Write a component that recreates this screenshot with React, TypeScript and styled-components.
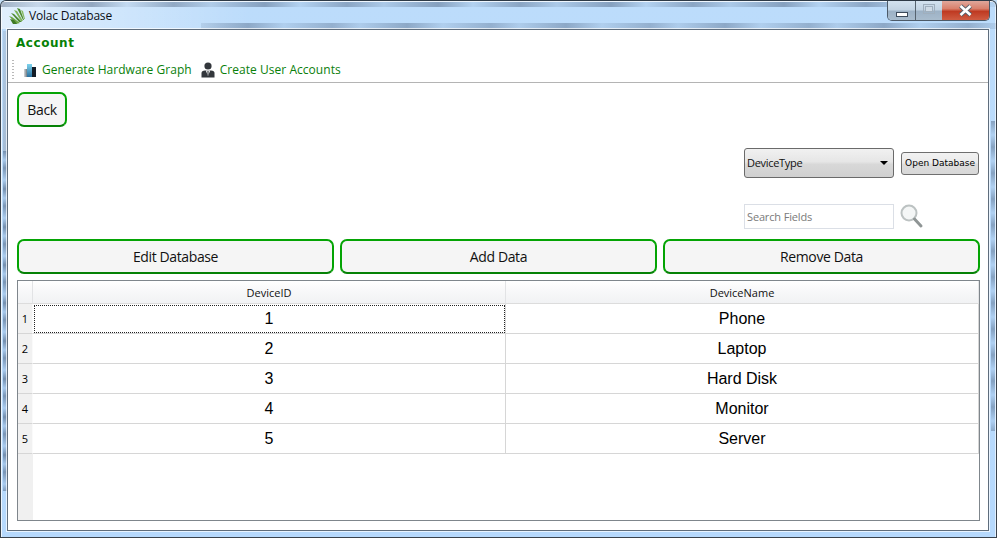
import { Fragment } from 'react';
import styled, { createGlobalStyle } from 'styled-components';

const GlobalStyle = createGlobalStyle`
  html, body {
    margin: 0;
    padding: 0;
    background: #c4dff6;
  }
  * {
    box-sizing: border-box;
  }
`;

const devices = ['Phone', 'Laptop', 'Hard Disk', 'Monitor', 'Server'];

const Frame = styled.div`
  width: 997px;
  height: 538px;
  display: flex;
  flex-direction: column;
  overflow: hidden;
  border: 1px solid #39424c;
  border-top-color: #2e3a46;
  border-radius: 6px 6px 0 0;
  box-shadow: inset 1px 1px 0 rgba(255, 255, 255, 0.75), inset -1px 0 0 rgba(255, 255, 255, 0.6);
  background:
    repeating-linear-gradient(180deg, rgba(70, 92, 122, 0.6) 0, rgba(120, 150, 185, 0.25) 9px, rgba(70, 92, 122, 0.55) 17px, rgba(120, 150, 185, 0.2) 29px, rgba(70, 92, 122, 0.6) 38px) 2px 150px / 4px 340px no-repeat,
    linear-gradient(180deg, rgba(140, 150, 165, 0.25), rgba(140, 150, 165, 0.45)) 2px 30px / 4px 120px no-repeat,
    repeating-linear-gradient(180deg, rgba(70, 92, 122, 0.45) 0, rgba(120, 150, 185, 0.15) 14px, rgba(70, 92, 122, 0.45) 26px) 990px 120px / 4px 310px no-repeat,
    linear-gradient(180deg, #bcdcfb 0, #b6d9fd 100%);
`;

const TitleBar = styled.div`
  height: 28px;
  flex: none;
  display: flex;
  align-items: flex-start;
  padding-left: 7px;
  background:
    repeating-linear-gradient(90deg, rgba(70, 90, 120, 0.42) 0, rgba(70, 90, 120, 0.14) 37px, rgba(70, 90, 120, 0.46) 91px, rgba(70, 90, 120, 0.08) 126px, rgba(70, 90, 120, 0.42) 173px) 0 1px / 100% 5px no-repeat,
    repeating-linear-gradient(90deg, rgba(70, 90, 120, 0.12) 0, rgba(70, 90, 120, 0.4) 47px, rgba(70, 90, 120, 0.1) 83px, rgba(70, 90, 120, 0.34) 131px, rgba(70, 90, 120, 0.12) 159px) 200px 22px / 100% 6px no-repeat,
    linear-gradient(90deg, rgba(255, 255, 255, 0.55), rgba(255, 255, 255, 0) 25%);
`;

const AppIcon = styled.svg`
  width: 18px;
  height: 18px;
  margin-top: 6px;
  flex: none;
`;

const Title = styled.span`
  margin: 6px 0 0 3px;
  font: 12px/18px "Open Sans", sans-serif;
  letter-spacing: -0.2px;
  color: #0b0f16;
`;

const Controls = styled.div`
  margin-left: auto;
  margin-right: 6px;
  display: flex;
  height: 20px;
  border: 1px solid #4c5a68;
  border-top: none;
  border-radius: 0 0 5px 5px;
  overflow: hidden;
`;

const Control = styled.div<{ $width: number; $close?: boolean }>`
  width: ${(p) => p.$width}px;
  display: flex;
  align-items: center;
  justify-content: center;
  border-left: ${(p) => (p.$close ? 'none' : '1px solid #56636f')};
  background: ${(p) =>
    p.$close
      ? 'linear-gradient(180deg, #e0a79b 0, #d9806c 40%, #bf3a22 55%, #cf5c42 100%)'
      : 'linear-gradient(180deg, #d3e2ef 0, #c3d4e3 45%, #9db2c6 55%, #a9bccd 100%)'};
  &:first-child {
    border-left: none;
  }
`;

const MinGlyph = styled.div`
  width: 12px;
  height: 5px;
  margin-top: 7px;
  background: #fff;
  border: 1px solid #3c4a5a;
`;

const MaxGlyph = styled.div`
  width: 12px;
  height: 10px;
  margin-top: -3px;
  border: 1px solid #a0afbd;
  display: flex;
  align-items: center;
  justify-content: center;
  &::after {
    content: '';
    width: 6px;
    height: 4px;
    border: 1px solid #a0afbd;
    background: #cfdbe6;
  }
`;

const Client = styled.div`
  flex: none;
  height: 502px;
  margin: 0 7px 0 6px;
  display: flex;
  flex-direction: column;
  background: #fff;
  border: 1px solid #5f6d7c;
  box-shadow: 0 0 0 1px rgba(255, 255, 255, 0.7);
`;

const Heading = styled.div`
  height: 25px;
  padding: 5px 0 0 8px;
  font: bold 12px/16px "DejaVu Sans", sans-serif;
  letter-spacing: 0.55px;
  color: #078207;
`;

const Toolbar = styled.div`
  height: 28px;
  display: flex;
  align-items: center;
  padding: 2px 0 0 4px;
  border-bottom: 1px solid #b4b4b4;
`;

const Grip = styled.div`
  width: 2px;
  height: 20px;
  margin-right: 9px;
  background: repeating-linear-gradient(180deg, #b9b9b9 0, #b9b9b9 1px, transparent 1px, transparent 3px);
`;

const ToolItem = styled.div`
  display: flex;
  align-items: center;
  gap: 5px;
  margin-right: 9px;
  font: 12px/16px "Open Sans", sans-serif;
  letter-spacing: 0.04px;
  color: #0a800a;
`;

const Body = styled.div`
  flex: 1;
  display: flex;
  flex-direction: column;
  padding: 9px;
`;

const GreenButton = styled.button`
  height: 35px;
  padding: 0;
  border: 2px solid #04a404;
  border-bottom-color: #068206;
  border-radius: 7px;
  background: #f5f5f5;
  color: #111;
  font: 14px/18px "Open Sans", sans-serif;
  letter-spacing: -0.38px;
`;

const BackButton = styled(GreenButton)`
  width: 50px;
  align-self: flex-start;
`;

const SourceRow = styled.div`
  display: flex;
  align-items: center;
  margin-top: 21px;
  justify-content: flex-end;
  gap: 7px;
  height: 30px;
`;

const Combo = styled.div`
  width: 150px;
  height: 30px;
  display: flex;
  align-items: center;
  justify-content: space-between;
  padding: 0 5px 0 2px;
  border: 1px solid #6a6a6a;
  border-radius: 3px;
  background: linear-gradient(180deg, #f1f1f1 0, #e6e6e6 45%, #d8d8d8 55%, #d0d0d0 100%);
  font: 11px/14px "Open Sans", sans-serif;
  letter-spacing: -0.3px;
  color: #111;
`;

const ComboArrow = styled.span`
  width: 0;
  height: 0;
  border-left: 4px solid transparent;
  border-right: 4px solid transparent;
  border-top: 4px solid #000;
`;

const OpenButton = styled.button`
  width: 78px;
  height: 23px;
  padding: 0;
  border: 1px solid #6f6f6f;
  border-radius: 3px;
  background: linear-gradient(180deg, #f2f2f2 0, #ebebeb 45%, #dcdcdc 55%, #d8d8d8 100%);
  font: 9px/12px "DejaVu Sans", sans-serif;
  color: #000;
`;

const SearchRow = styled.div`
  display: flex;
  align-items: center;
  margin: 25px 0 0 727px;
  height: 26px;
  gap: 6px;
`;

const SearchField = styled.div`
  width: 150px;
  height: 25px;
  padding: 0 2px;
  border: 1px solid #dbdfe6;
  background: #fff;
  font: 11px/23px "Open Sans", sans-serif;
  letter-spacing: -0.15px;
  color: #7a7a7a;
`;

const ActionRow = styled.div`
  display: grid;
  grid-template-columns: 317px 317px 317px;
  gap: 6px;
  margin-top: 10px;
`;

const Table = styled.div`
  margin-top: 6px;
  width: 963px;
  height: 241px;
  display: grid;
  grid-template-columns: 15px 473px 1fr;
  grid-template-rows: 23px repeat(5, 30px) 1fr;
  background: #fff;
  border: 1px solid #7f868c;
`;

const HeaderCell = styled.div`
  display: flex;
  align-items: center;
  justify-content: center;
  padding-top: 2px;
  background: linear-gradient(180deg, #fff 0, #f9f9fa 35%, #f1f2f4 100%);
  border-right: 1px solid #e2e3e5;
  border-bottom: 1px solid #dcdcdc;
  font: 11px/14px "Open Sans", sans-serif;
  color: #111;
`;

const RowHeader = styled.div`
  display: flex;
  align-items: center;
  justify-content: center;
  background: #f1f1f1;
  border-right: 1px solid #fafafa;
  border-bottom: 1px solid #d6d6d6;
  font: 11px/14px "Open Sans", sans-serif;
  color: #000;
`;

const Cell = styled.div<{ $focused?: boolean }>`
  display: flex;
  align-items: center;
  justify-content: center;
  padding-top: 1px;
  border-right: 1px solid #d6d6d6;
  border-bottom: 1px solid #d6d6d6;
  outline: ${(p) => (p.$focused ? '1px dotted #222' : 'none')};
  outline-offset: -2px;
  font: 16px/20px "Liberation Sans", sans-serif;
  color: #000;
`;

const RowHeaderFill = styled.div`
  background: #f0f0f0;
`;

const App = () => {
  return (
    <>
      <GlobalStyle />
      <Frame>
        <TitleBar>
          <AppIcon viewBox="0 0 18 18">
            <path d="M1 9 L4 10 L12 16 L8 17Z" fill="#6ea544" />
            <path d="M3 6 L6 7 L14 15 L11 15Z" fill="#4d8b2e" />
            <path d="M6 3 L9 4 L15 14 L13 14Z" fill="#7db356" />
            <path d="M9 1 L12 2 L16 13 L15 13Z" fill="#4d8b2e" />
            <path d="M13 3 L15 4 L17 12 L16 12Z" fill="#86ba62" />
            <path d="M2 12 L6 13 L9 17 L5 17Z" fill="#3f7a27" />
          </AppIcon>
          <Title>Volac Database</Title>
          <Controls>
            <Control $width={27}>
              <MinGlyph />
            </Control>
            <Control $width={27}>
              <MaxGlyph />
            </Control>
            <Control $width={47} $close>
              <svg width="15" height="13" viewBox="0 0 15 13">
                <path d="M2.5 2 L12.5 11 M12.5 2 L2.5 11" stroke="#56606b" strokeWidth="4.4" />
                <path d="M2.5 2 L12.5 11 M12.5 2 L2.5 11" stroke="#fff" strokeWidth="2.6" />
              </svg>
            </Control>
          </Controls>
        </TitleBar>
        <Client>
          <Heading>Account</Heading>
          <Toolbar>
            <Grip />
            <ToolItem>
              <svg width="14" height="14" viewBox="0 0 14 14">
                <defs>
                  <linearGradient id="barShade" x1="0" x2="1" y1="0" y2="0">
                    <stop offset="0" stopColor="#d5d8da" />
                    <stop offset="1" stopColor="#6f7a82" />
                  </linearGradient>
                  <linearGradient id="barBlue" x1="0" x2="0" y1="0" y2="1">
                    <stop offset="0" stopColor="#7fd4ee" />
                    <stop offset="1" stopColor="#2a6f9e" />
                  </linearGradient>
                </defs>
                <rect x="1" y="6" width="3" height="8" fill="url(#barShade)" />
                <rect x="4" y="1" width="5" height="13" fill="url(#barBlue)" />
                <rect x="9" y="4" width="4" height="10" fill="#141c26" />
              </svg>
              Generate Hardware Graph
            </ToolItem>
            <ToolItem>
              <svg width="14" height="16" viewBox="0 0 14 16">
                <circle cx="7" cy="4" r="3.6" fill="#33373c" />
                <path d="M0.5 15.5 V11 Q0.5 8.5 4 8.5 H10 Q13.5 8.5 13.5 11 V15.5Z" fill="#33373c" />
                <path d="M4.8 8.5 H9.2 L7 14Z" fill="#fff" />
                <path d="M6.4 9 H7.6 L7.5 12.5 L7 13.4 L6.5 12.5Z" fill="#33373c" />
              </svg>
              Create User Accounts
            </ToolItem>
          </Toolbar>
          <Body>
            <BackButton>Back</BackButton>
            <SourceRow>
              <Combo>
                DeviceType
                <ComboArrow />
              </Combo>
              <OpenButton>Open Database</OpenButton>
            </SourceRow>
            <SearchRow>
              <SearchField>Search Fields</SearchField>
              <svg width="24" height="26" viewBox="0 0 24 26">
                <circle cx="9" cy="10" r="7.5" fill="#f4f6f6" stroke="#bcc2c2" strokeWidth="2" />
                <path d="M14.5 16 L21 23" stroke="#8f9595" strokeWidth="3" strokeLinecap="round" />
              </svg>
            </SearchRow>
            <ActionRow>
              <GreenButton>Edit Database</GreenButton>
              <GreenButton>Add Data</GreenButton>
              <GreenButton>Remove Data</GreenButton>
            </ActionRow>
            <Table>
              <HeaderCell />
              <HeaderCell>DeviceID</HeaderCell>
              <HeaderCell>DeviceName</HeaderCell>
              {devices.map((name, i) => (
                <Fragment key={name}>
                  <RowHeader>{i + 1}</RowHeader>
                  <Cell $focused={i === 0}>{i + 1}</Cell>
                  <Cell>{name}</Cell>
                </Fragment>
              ))}
              <RowHeaderFill />
            </Table>
          </Body>
        </Client>
      </Frame>
    </>
  );
};

export default App;
